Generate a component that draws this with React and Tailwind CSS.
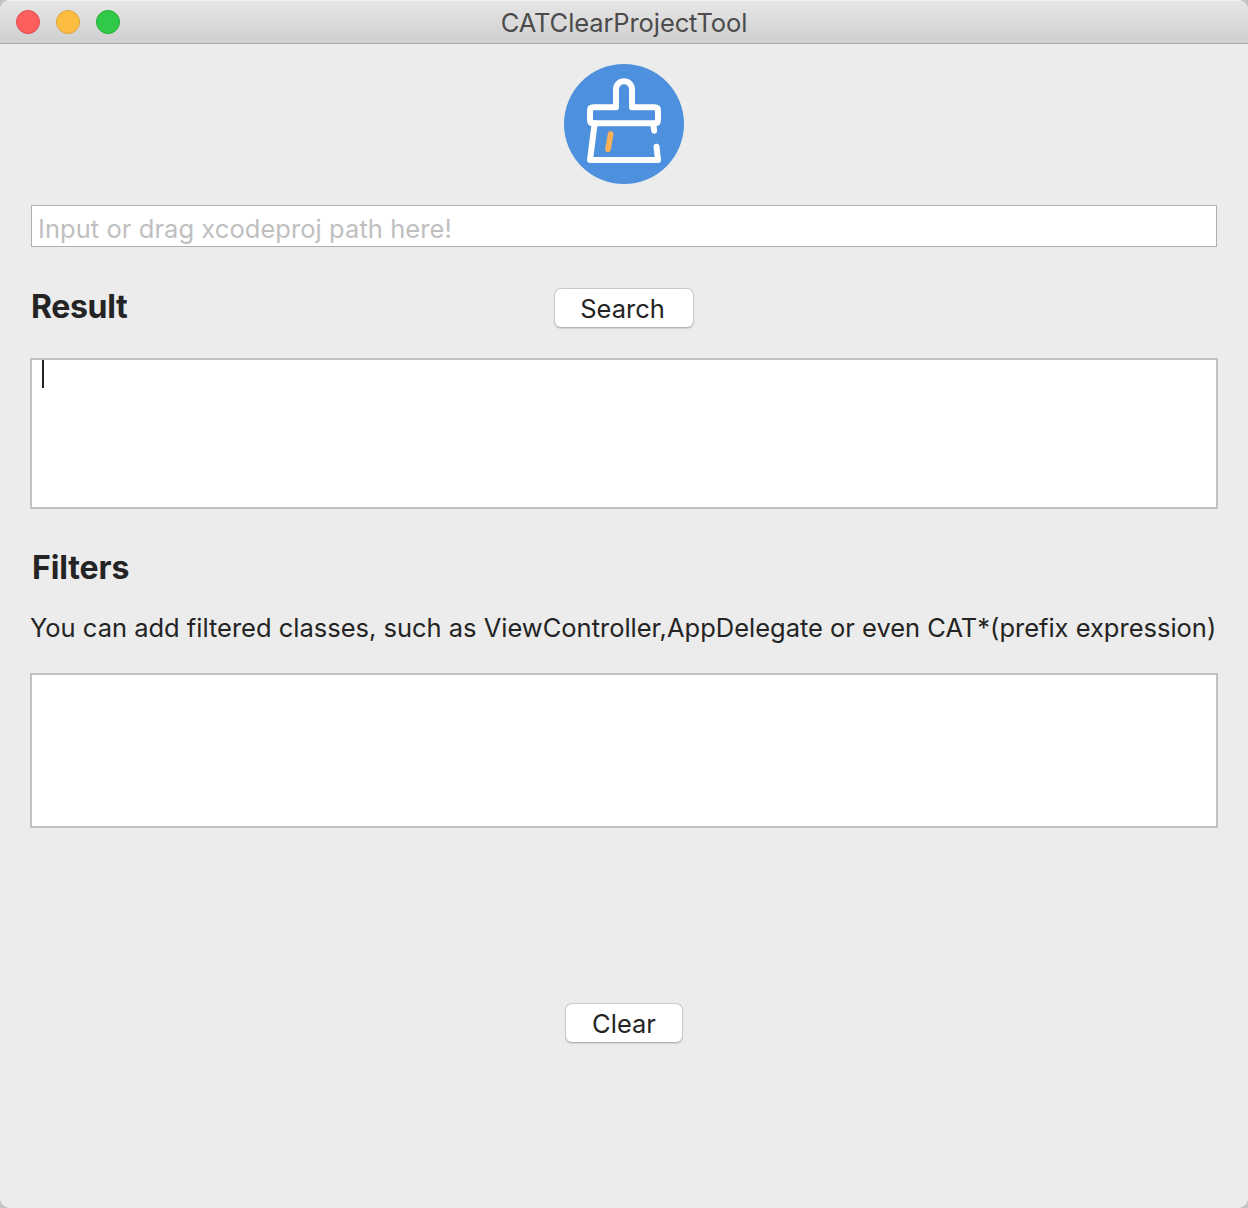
function BrushLogo() {
  return (
    <svg className="size-[120px]" viewBox="42 30 360 360" fill="none" strokeLinecap="round" strokeLinejoin="round">
      <circle cx="222" cy="210" r="180" fill="#4c90de" />
      <g stroke="#fff" strokeWidth="18">
        <path d="M198 160V106a24 24 0 0 1 48 0V160H314q10 0 10 10V198q0 10-10 10H130q-10 0-10-10V170q0-10 10-10Z" />
        <path d="M134 208L120 318H324L319.500 278" />
        <path d="M310 212L312.500 230" />
      </g>
      <path d="M182 240L174 286" stroke="#fbb154" strokeWidth="17" />
    </svg>
  );
}

function PushButton({ className, children }) {
  return (
    <button
      className={
        "flex h-10 items-center justify-center rounded-[7px] border border-[#c9c9c9] border-b-[#b4b4b4] bg-white pt-0.5 text-[25.5px] leading-none text-[#242424] shadow-[0_1px_1px_rgba(0,0,0,0.12)] " +
        className
      }
    >
      {children}
    </button>
  );
}

export default function App() {
  return (
    <div className="h-[1208px] w-[1248px] overflow-hidden bg-[#c4c4c4] font-['Inter',sans-serif] text-[#242424]">
      <div className="flex h-full flex-col overflow-hidden rounded-[10px] bg-[#ececec]">
        <header className="grid h-11 shrink-0 grid-cols-3 items-center border-t border-b border-t-[#f2f2f2] border-b-[#a8a8a8] bg-linear-to-b from-[#e6e6e6] to-[#cfcfcf] px-4">
          <div className="flex gap-4">
            <span className="size-6 rounded-full border border-[#e2494a] bg-[#fd605c]" />
            <span className="size-6 rounded-full border border-[#dfa03a] bg-[#fdbd40]" />
            <span className="size-6 rounded-full border border-[#1ead33] bg-[#33c948]" />
          </div>
          <h1 className="pt-0.5 text-center text-[25.5px] leading-8 tracking-[-0.1px] text-[#4b4b4b]">
            CATClearProjectTool
          </h1>
        </header>

        <main className="flex flex-col px-[30px] pt-5">
          <div className="flex justify-center">
            <BrushLogo />
          </div>

          <input
            className="mx-px mt-[21px] h-[42px] border border-[#b0b0b0] bg-white px-1.5 pt-[5px] text-[25.5px] tracking-[0.06px] outline-none placeholder:text-[#bfbfbf]"
            placeholder="Input or drag xcodeproj path here!"
          />

          <div className="mt-[41px] grid h-10 grid-cols-3 items-center">
            <h2 className="pb-[3px] pl-px text-[32px] leading-9 font-bold tracking-[-0.35px]">Result</h2>
            <PushButton className="w-[140px] justify-self-center pr-[3px]">Search</PushButton>
          </div>

          <div className="mt-[30px] h-[151px] border-2 border-[#c1c1c1] bg-white pl-2.5">
            <div className="h-7 w-0.5 bg-[#242424]" />
          </div>

          <h2 className="mt-[41px] pl-0.5 text-[32px] leading-9 font-bold tracking-[-0.1px]">Filters</h2>
          <p className="mt-[26px] text-[25.5px] leading-8 tracking-[-0.01px] whitespace-nowrap">
            You can add filtered classes, such as ViewController,AppDelegate or even CAT*(prefix expression)
          </p>

          <div className="mt-[29px] h-[155px] border-2 border-[#c1c1c1] bg-white" />

          <div className="mt-[175px] flex justify-center">
            <PushButton className="w-[118px]">Clear</PushButton>
          </div>
        </main>
      </div>
    </div>
  );
}
